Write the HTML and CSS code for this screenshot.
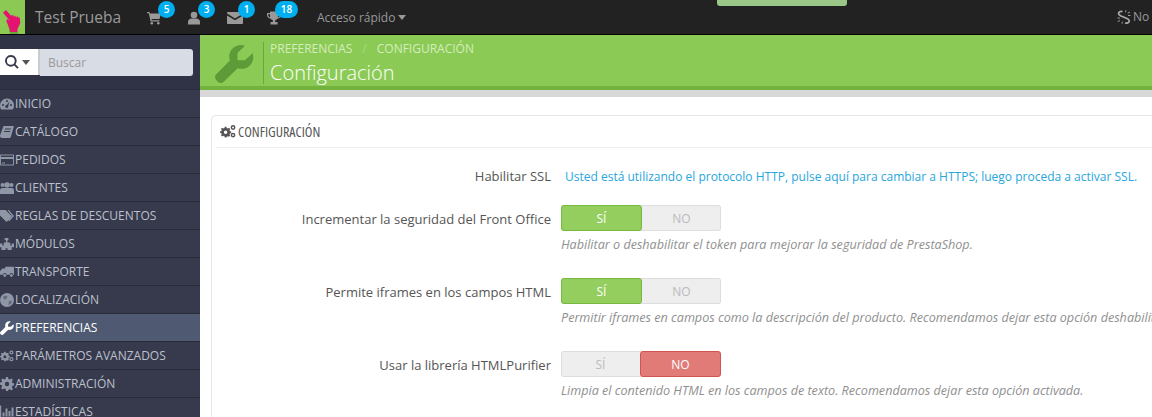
FILE: index.html
```html
<!DOCTYPE html>
<html lang="es">
<head>
<meta charset="utf-8">
<title>Configuración</title>
<link rel="stylesheet" href="styles.css">
</head>
<body>
<svg class="defs" width="0" height="0" aria-hidden="true">
  <symbol id="i-wrench" viewBox="0 0 40 40"><path d="M38.600 9.500c.5 1.300.7 2.600.7 4 0 6.600-5.400 12-12 12-1.400 0-2.800-.3-4-.7L8.700 39c-1.700 1.300-4.200 1.200-5.800-.4L1.300 37c-1.600-1.600-1.700-4-.3-5.700L15.300 16.900c-.5-1.200-.7-2.600-.7-4C14.600 6.300 20 1 26.600 1c1.400 0 2.800.2 4 .7l-7.500 7.500v7.500h7.600z"/></symbol>
  <symbol id="i-cogs" viewBox="0 0 20 16"><path fill-rule="evenodd" d="M6 2h2l.4 1.500 1.500.6 1.400-.8 1.400 1.400-.8 1.400.6 1.500 1.500.4v2l-1.500.4-.6 1.500.8 1.400-1.400 1.400-1.400-.8-1.500.6L8 15.500H6l-.4-1.500-1.500-.6-1.400.8-1.400-1.400.8-1.400-.6-1.500L0 10V8l1.500-.4.6-1.500-.8-1.400 1.400-1.400 1.400.8 1.500-.6zM7 6.800a2.200 2.200 0 100 4.400 2.200 2.200 0 000-4.400z"/><path fill-rule="evenodd" d="M16.300 0a3 3 0 110 6 3 3 0 010-6zm0 1.800a1.200 1.200 0 100 2.400 1.200 1.200 0 000-2.400zM16.300 9.500a3 3 0 110 6 3 3 0 010-6zm0 1.800a1.200 1.200 0 100 2.400 1.200 1.200 0 000-2.400z"/></symbol>
  <symbol id="i-cart" viewBox="0 0 14 14"><path d="M0 1h2.500l.4 1.500H14l-1.500 5.500H4.500l.3 1.300h7.700v1.200H3.600L1.800 2.200H0z"/><circle cx="4.800" cy="12.300" r="1.300"/><circle cx="11.300" cy="12.300" r="1.300"/></symbol>
  <symbol id="i-user" viewBox="0 0 14 14"><circle cx="7" cy="4" r="3.300"/><path d="M1 13.500V11c0-2.200 1.800-3.500 3.500-3.500h5c1.700 0 3.500 1.300 3.500 3.500v2.500z"/></symbol>
  <symbol id="i-mail" viewBox="0 0 16 12"><path d="M1 0h14c.6 0 1 .4 1 1v.6L8 6.500 0 1.600V1c0-.6.4-1 1-1zM0 3.400l8 4.900 8-4.900V11c0 .6-.4 1-1 1H1c-.6 0-1-.4-1-1z"/></symbol>
  <symbol id="i-trophy" viewBox="0 0 14 14"><path fill-rule="evenodd" d="M3 .5h8v1.500h3V4c0 2-1.500 3.500-3.700 3.700-.5.700-1.200 1.200-2.100 1.400V11h2.300v2.500H3.500V11h2.300V9.100c-.9-.2-1.600-.7-2.100-1.400C1.500 7.500 0 6 0 4V2h3zM1.200 3.200V4c0 1.200.8 2.100 1.900 2.400-.1-1-.1-2.100-.1-3.200zm11.600 0H11c0 1.100 0 2.200-.1 3.200 1.100-.3 1.900-1.200 1.900-2.400z"/></symbol>
  <symbol id="i-unlink" viewBox="0 0 14 14"><path d="M5.500 1.500C3.500 1 1.500 2 1.500 3.500c0 1.200 1 1.800 2.500 2.500l5.500 2.300c1.600.7 2.800 1.400 2.800 2.600 0 1.500-2 2.600-4.300 2.100" fill="none" stroke="currentColor" stroke-width="1.700"/><path d="M9 .3l-.5 2M13 2l-2.300 1.300M.7 11.500L3 10.600M5 13.700l.5-2M13.500 5.500H11M.5 8H3" fill="none" stroke="currentColor" stroke-width=".9"/></symbol>
  <symbol id="i-search" viewBox="0 0 14 14"><path fill-rule="evenodd" d="M5.800 0a5.800 5.800 0 014.700 9.200l3.200 3.200-1.400 1.400-3.200-3.200A5.800 5.800 0 115.800 0zm0 1.900a3.900 3.900 0 100 7.800 3.900 3.900 0 000-7.800z"/></symbol>
  <symbol id="i-gauge" viewBox="0 0 14 14"><path fill-rule="evenodd" d="M7 1.500a7 7 0 017 7c0 1.500-.4 2.900-1.200 4H1.200A7 7 0 010 8.500a7 7 0 017-7zM7 3a1 1 0 100 2 1 1 0 000-2zM3 7a1 1 0 100 2 1 1 0 000-2zm8 0a1 1 0 100 2 1 1 0 000-2zM9.500 4.500L6.700 8a1.500 1.500 0 101.500 1z"/></symbol>
  <symbol id="i-book" viewBox="0 0 14 14"><path fill-rule="evenodd" d="M3.500 1H14l-.4 1.200L11 11.500c-.2.800-.8 1.500-1.800 1.500H2c-1.200 0-2-1-2-2 0-.3 0-.6.100-.9zM5 3.500l-.3 1h6l.3-1zm-.8 2.500l-.3 1h6l.3-1z"/></symbol>
  <symbol id="i-card" viewBox="0 0 14 12"><path d="M1 .5h12c.6 0 1 .4 1 1v9c0 .6-.4 1-1 1H1c-.6 0-1-.4-1-1v-9c0-.6.4-1 1-1zm0 1v1.500h12V1.500zm0 3.500v5.500h12V5zm1 3.500h3v1H2z" fill-rule="evenodd"/></symbol>
  <symbol id="i-users" viewBox="0 0 14 14"><circle cx="2.500" cy="4" r="2"/><circle cx="11.500" cy="4" r="2"/><circle cx="7" cy="4" r="2.800"/><path d="M2 7h10c1.200 0 2 1 2 2.300v3.700H0V9.300C0 8 .8 7 2 7z"/></symbol>
  <symbol id="i-tags" viewBox="0 0 15 13"><path d="M0 0h6l7 7-6 6-7-7zM8 0h1.500l5.500 6.500-5 5.500-1-1 4-4.500z" fill-rule="evenodd"/></symbol>
  <symbol id="i-puzzle" viewBox="0 0 15 13"><path d="M5 0h4v2.500H8V5h3v3.200h1.500V6H15v4h-2.500v3H8v-2H6v2H1.500v-3H0V6h2.500v2.200H4V5h2.500V2.500H5z"/></symbol>
  <symbol id="i-truck" viewBox="0 0 16 12"><path d="M6 0h10v9h-1a2 2 0 00-4 0H7.500a2 2 0 00-4 0H0V5l2.500-3H6z"/><circle cx="5.500" cy="10" r="1.600"/><circle cx="13" cy="10" r="1.600"/></symbol>
  <symbol id="i-globe" viewBox="0 0 14 14"><circle cx="7" cy="7" r="7"/><path d="M3 3.500l2.500-1 2 1-1 2.500-2.500.5zM9 8l3-.5-1 3.500-2.500 1z" fill="#363a4c" opacity=".45"/></symbol>
  <symbol id="i-cog" viewBox="0 0 14 14"><path fill-rule="evenodd" d="M6 0h2l.4 2 1.400.6 1.700-1.200L13 2.900l-1.200 1.700.6 1.400 2 .4v2l-2 .4-.6 1.400 1.200 1.700-1.500 1.500-1.700-1.200-1.400.6L8 14H6l-.4-2-1.400-.6-1.700 1.200L1 11.100l1.200-1.700L1.600 8l-2-.4v-2l2-.4.6-1.400L1 2.900 2.500 1.400l1.700 1.200 1.400-.6zM7 4.800a2.200 2.200 0 100 4.400 2.200 2.200 0 000-4.400z"/></symbol>
  <symbol id="i-chart" viewBox="0 0 14 13"><path d="M0 0h1.200v11.800H14V13H0zM2.500 7h2v4h-2zm3-4h2v8h-2zm3 2.500h2V11h-2zm3-3.500h2v9h-2z"/></symbol>
</svg>

<header class="topbar">
  <a class="logo" href="#" aria-label="Inicio">
    <svg viewBox="0 0 25 34" width="25" height="34"><path class="hand-shadow" d="M7 21l3 13h9l-8-10z"/><path class="hand" d="M3 12.800L6 10l5 5.800 1.700-1 1.300 2.200.9-1.700 1.300 2.200 1.300-1.500 1.300 2 1.100-.6.300 5.800-2.700 5.800V32h-7.300l-.7-3.800-3.300-7.500 1.300-1.700 2.500 2z"/></svg>
  </a>
  <span class="shop">Test Prueba</span>
  <nav class="notifs">
    <a class="notif" href="#"><svg class="notif-icon"><use href="#i-cart"/></svg><b class="badge">5</b></a>
    <a class="notif" href="#"><svg class="notif-icon"><use href="#i-user"/></svg><b class="badge">3</b></a>
    <a class="notif" href="#"><svg class="notif-icon"><use href="#i-mail"/></svg><b class="badge">1</b></a>
    <a class="notif" href="#"><svg class="notif-icon"><use href="#i-trophy"/></svg><b class="badge badge-wide">18</b></a>
  </nav>
  <a class="quick" href="#">Acceso rápido<i class="caret"></i></a>
  <div class="status-tab"></div>
  <a class="debug" href="#"><svg class="debug-icon"><use href="#i-unlink"/></svg>No</a>
</header>

<div class="layout">
  <aside class="sidebar">
    <form class="search">
      <div class="search-btn"><svg class="search-icon"><use href="#i-search"/></svg><i class="caret caret-dark"></i></div>
      <input class="search-input" placeholder="Buscar">
    </form>
    <ul class="menu">
      <li><svg class="mi"><use href="#i-gauge"/></svg>INICIO</li>
      <li><svg class="mi"><use href="#i-book"/></svg>CATÁLOGO</li>
      <li><svg class="mi"><use href="#i-card"/></svg>PEDIDOS</li>
      <li><svg class="mi"><use href="#i-users"/></svg>CLIENTES</li>
      <li><svg class="mi"><use href="#i-tags"/></svg>REGLAS DE DESCUENTOS</li>
      <li><svg class="mi"><use href="#i-puzzle"/></svg>MÓDULOS</li>
      <li><svg class="mi"><use href="#i-truck"/></svg>TRANSPORTE</li>
      <li><svg class="mi"><use href="#i-globe"/></svg>LOCALIZACIÓN</li>
      <li class="active"><svg class="mi"><use href="#i-wrench"/></svg>PREFERENCIAS</li>
      <li><svg class="mi"><use href="#i-cogs"/></svg>PARÁMETROS AVANZADOS</li>
      <li><svg class="mi"><use href="#i-cog"/></svg>ADMINISTRACIÓN</li>
      <li><svg class="mi"><use href="#i-chart"/></svg>ESTADÍSTICAS</li>
    </ul>
  </aside>

  <main class="content">
    <div class="pagehead">
      <svg class="head-icon"><use href="#i-wrench"/></svg>
      <div class="head-text">
        <div class="crumbs"><span>PREFERENCIAS</span><span class="sep">/</span><span>CONFIGURACIÓN</span></div>
        <h1 class="title">Configuración</h1>
      </div>
    </div>
    <div class="graybar"></div>
    <section class="panel">
      <h2 class="panel-title"><svg class="panel-icon"><use href="#i-cogs"/></svg>CONFIGURACIÓN</h2>

      <div class="row row-ssl">
        <label class="lbl">Habilitar SSL</label>
        <div class="field"><a class="link" href="#">Usted está utilizando el protocolo HTTP, pulse aquí para cambiar a HTTPS; luego proceda a activar SSL.</a></div>
      </div>

      <div class="row">
        <label class="lbl">Incrementar la seguridad del Front Office</label>
        <div class="field">
          <div class="switch"><span class="opt on-yes">SÍ</span><span class="opt">NO</span></div>
          <p class="help">Habilitar o deshabilitar el token para mejorar la seguridad de PrestaShop.</p>
        </div>
      </div>

      <div class="row">
        <label class="lbl">Permite iframes en los campos HTML</label>
        <div class="field">
          <div class="switch"><span class="opt on-yes">SÍ</span><span class="opt">NO</span></div>
          <p class="help">Permitir iframes en campos como la descripción del producto. Recomendamos dejar esta opción deshabilitada.</p>
        </div>
      </div>

      <div class="row">
        <label class="lbl">Usar la librería HTMLPurifier</label>
        <div class="field">
          <div class="switch"><span class="opt">SÍ</span><span class="opt on-no">NO</span></div>
          <p class="help">Limpia el contenido HTML en los campos de texto. Recomendamos dejar esta opción activada.</p>
        </div>
      </div>
    </section>
  </main>
</div>
</body>
</html>
```

FILE: styles.css
```css
* { box-sizing: border-box; }
html, body { margin: 0; height: 100%; overflow: hidden; }
body { font-family: "Open Sans", sans-serif; font-size: 12px; color: #555; background: #fff; width: 1152px; height: 417px; }
.defs { position: absolute; }
a { text-decoration: none; color: inherit; }

.topbar { position: relative; display: flex; align-items: center; height: 35px; background: #222; border-bottom: 1px solid #000; color: #999; }
.logo { display: block; width: 25px; height: 34px; background: #8bc954; flex: none; }
.logo svg { display: block; }
.hand { fill: #e5126f; }
.hand-shadow { fill: #6ba53e; }
.shop { margin-left: 10px; font-size: 15.500px; color: #9a9a9a; width: 112px; flex: none; }
.notifs { display: flex; }
.notif { position: relative; display: block; width: 40px; height: 34px; }
.notif-icon { position: absolute; left: 0; top: 11px; width: 14px; height: 14px; fill: #999; }
.notif:nth-child(3) .notif-icon { width: 16px; }
.badge { position: absolute; left: 11px; top: 1px; min-width: 17px; height: 17px; padding: 0 5px; border-radius: 9px; background: #00aff0; color: #fff; font-size: 10px; font-weight: 600; line-height: 16px; text-align: center; }
.badge-wide { left: 8px; min-width: 23px; }
.quick { margin-left: 10px; font-size: 12px; color: #999; display: flex; align-items: center; }
.caret { display: inline-block; margin-left: 3px; border-left: 4px solid transparent; border-right: 4px solid transparent; border-top: 5px solid #999; }
.caret-dark { border-top-color: #555; margin-left: 3px; }
.status-tab { position: absolute; left: 717px; top: 0; width: 130px; height: 6px; background: #9ac688; border-radius: 0 0 3px 3px; }
.debug { position: absolute; left: 1117px; top: 8px; display: flex; align-items: center; font-size: 12px; color: #999; white-space: nowrap; }
.debug-icon { width: 14px; height: 14px; margin-right: 2px; color: #aaa; }

.layout { display: flex; height: 382px; }
.sidebar { width: 200px; flex: none; background: #363a4c; overflow: hidden; }
.search { display: flex; align-items: stretch; height: 55px; padding: 14px 7px 14px 0; background: #2f3345; border-bottom: 1px solid #2a2e3e; }
.search-btn { display: flex; align-items: center; width: 40px; padding-left: 5px; background: #fff; border-right: 2px solid #ccc; flex: none; }
.search-icon { width: 14px; height: 14px; fill: #363a4c; flex: none; }
.search-input { flex: 1; min-width: 0; height: 27px; border: 0; padding: 0 8px; background: #d8dce4; border-radius: 0 3px 3px 0; font: 12px "Open Sans", sans-serif; color: #999; outline: 0; }
.search-input::placeholder { color: #999; }
.menu { list-style: none; margin: 0; padding: 0; }
.menu li { display: flex; align-items: center; height: 28px; border-bottom: 1px solid #292c3a; font-size: 12px; color: #bcc0cc; white-space: nowrap; }
.menu li.active { background: #4f5a72; color: #fff; }
.mi { width: 14px; height: 14px; margin-right: 1px; fill: #8f96a6; flex: none; }
.active .mi { fill: #fff; }

.content { flex: 1; min-width: 0; }
.pagehead { display: flex; align-items: center; height: 55px; padding: 5px 0 0 15px; background: #8bcb55; border-bottom: 4px solid #72b33e; }
.head-icon { width: 39px; height: 39px; fill: #5d9a38; margin-right: 9px; flex: none; }
.head-text { border-left: 1px solid #6ba63f; padding-left: 6px; height: 42px; }
.crumbs { display: flex; font-size: 12px; color: #d6ecbf; line-height: 14px; }
.sep { margin: 0 10px; color: #a9d685; }
.title { margin: 4px 0 0; font-size: 20px; font-weight: 300; color: #fff; line-height: 26px; }
.graybar { height: 7px; background: #d8d8d8; }

.panel { margin: 18px -30px 0 11px; padding: 0 4px; border: 1px solid #e6e6e6; border-radius: 5px 0 0 0; height: 400px; width: 1000px; }
.panel-title { display: flex; align-items: center; height: 32px; margin: 0; padding-left: 4px; border-bottom: 1px solid #eee; font-family: "Open Sans", sans-serif; font-stretch: 82%; font-size: 14px; font-weight: 400; color: #555; }
.panel-icon { width: 16px; height: 13px; margin-right: 2px; fill: #555; }
.row { display: flex; margin-bottom: 26px; }
.row-ssl { margin-top: 19px; margin-bottom: 19px; }
.lbl { width: 335px; flex: none; text-align: right; font-size: 13px; line-height: 19px; color: #555; padding-top: 5px; }
.row-ssl .lbl { padding-top: 0; }
.field { margin-left: 10px; flex: none; width: 660px; }
.row-ssl .field { margin-left: 14px; }
.link { font-size: 12px; line-height: 19px; color: #27a6dc; white-space: nowrap; }
.switch { display: flex; width: 160px; height: 26px; background: #eee; border-radius: 3px; box-shadow: inset 0 0 0 1px #ddd; }
.opt { flex: 1; display: flex; align-items: center; justify-content: center; font-size: 12px; font-weight: 400; color: #bbb; }
.on-yes { background: #93ce5f; border: 1px solid #77b83f; border-radius: 3px; color: #fff; }
.on-no { background: #e07b78; border: 1px solid #d2534f; border-radius: 3px; color: #fff; }
.help { margin: 6px 0 0; font-size: 12.600px; font-style: italic; line-height: 15px; color: #8f8f8f; white-space: nowrap; }
```
